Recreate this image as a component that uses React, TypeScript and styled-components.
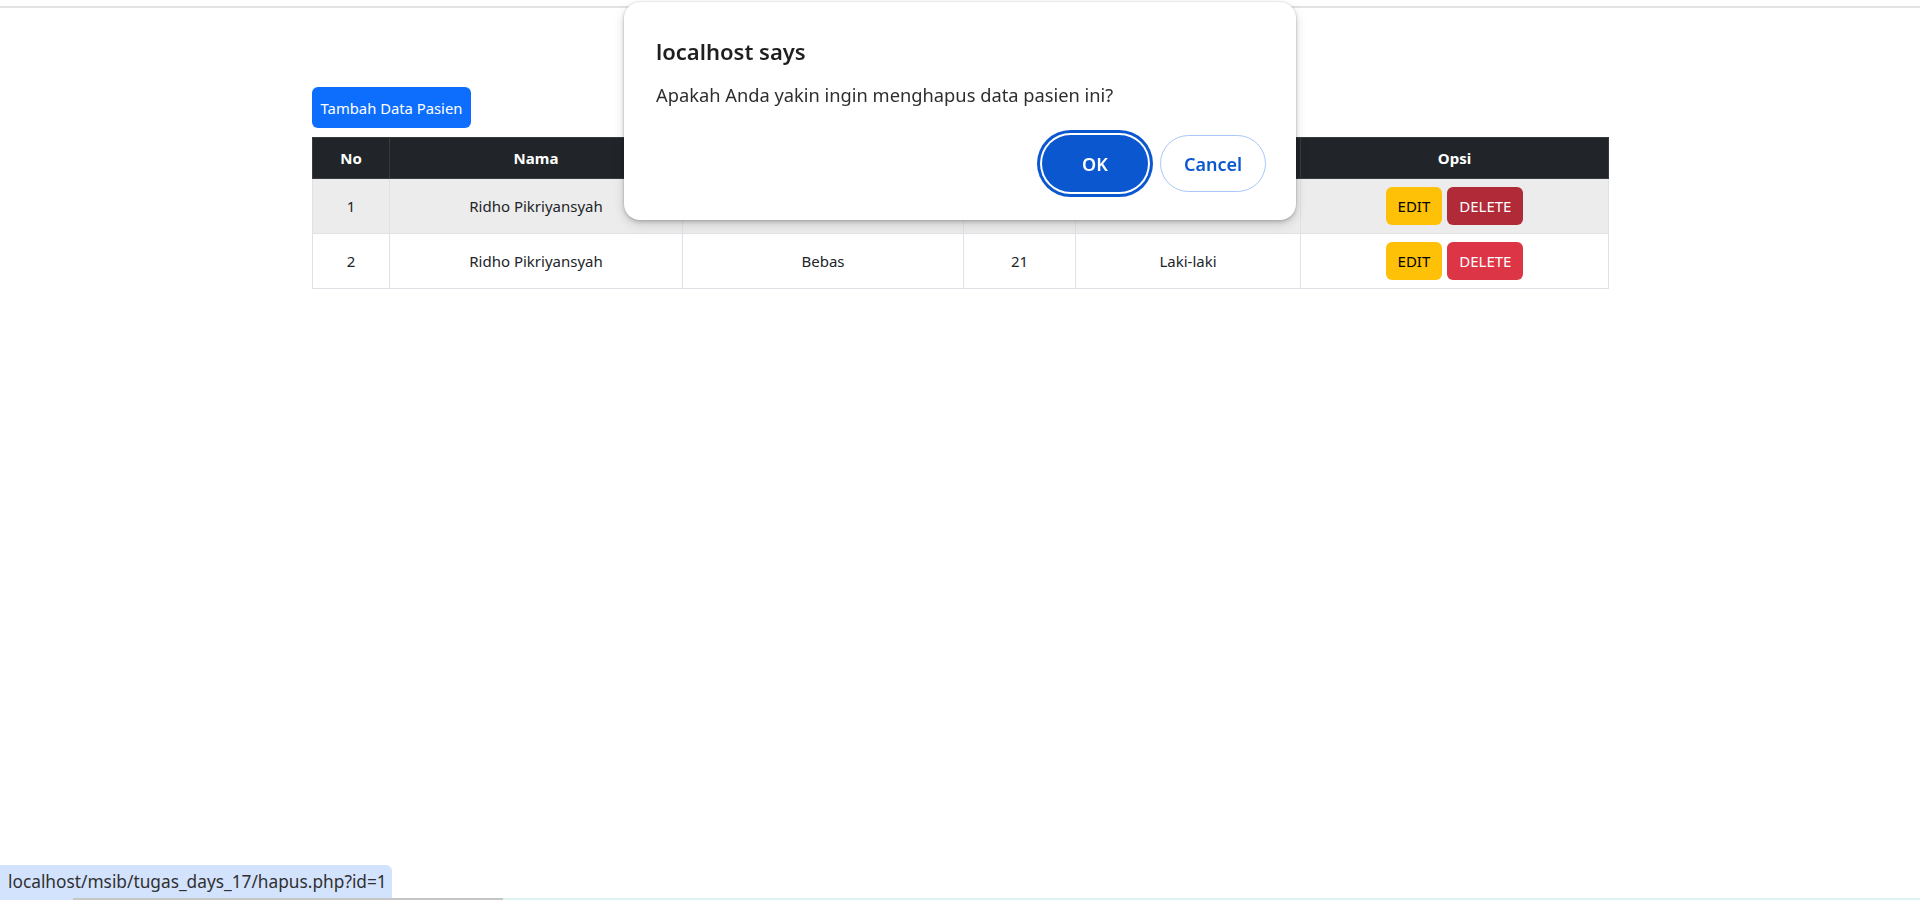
import React from "react";
import styled, { createGlobalStyle } from "styled-components";

const SANS = `"Noto Sans", "Open Sans", sans-serif`;

const GlobalStyle = createGlobalStyle`
  html, body { margin: 0; padding: 0; background: #ffffff; }
  body { font-family: ${SANS}; color: #212529; overflow: hidden; }
  * { box-sizing: border-box; }
`;

const Page = styled.div`
  min-height: 900px;
`;

const TopRule = styled.div`
  height: 2px;
  margin-top: 6px;
  background: #e2e2e2;
`;

const Container = styled.main`
  width: 1296px;
  margin: 79px auto 0;
`;

const Toolbar = styled.div`
  display: flex;
`;

const PrimaryButton = styled.button`
  width: 159px;
  height: 41px;
  border: none;
  border-radius: 6px;
  background: #0d6efd;
  color: #ffffff;
  font-family: ${SANS};
  font-size: 14.8px;
  padding: 0;
  display: flex;
  align-items: center;
  justify-content: center;
`;

const Table = styled.table`
  width: 100%;
  margin-top: 9px;
  border-collapse: collapse;
  table-layout: fixed;
  font-size: 15px;
`;

const HeadCell = styled.th`
  background: #212529;
  color: #ffffff;
  border: 1px solid #373b3e;
  padding: 8px;
  line-height: 24px;
  font-weight: 700;
  text-align: center;
`;

const Row = styled.tr<{ $hover?: boolean }>`
  background: ${(p) => (p.$hover ? "#ececec" : "#ffffff")};
`;

const Cell = styled.td`
  border: 1px solid #dee2e6;
  padding: 8px;
  line-height: 24px;
  text-align: center;
  vertical-align: middle;
  color: #212529;
`;

const Actions = styled.div`
  display: flex;
  justify-content: center;
  gap: 5px;
`;

const ActionButton = styled.button<{ $kind: "edit" | "delete" | "deleteHover" }>`
  height: 38px;
  padding: 0 12px;
  border: none;
  border-radius: 6px;
  font-family: ${SANS};
  font-size: 15px;
  background: ${(p) =>
    p.$kind === "edit" ? "#ffc107" : p.$kind === "deleteHover" ? "#b02a37" : "#dc3545"};
  color: ${(p) => (p.$kind === "edit" ? "#000000" : "#ffffff")};
`;

const Dialog = styled.div`
  position: fixed;
  top: 2px;
  left: 50%;
  transform: translateX(-50%);
  width: 672px;
  background: #ffffff;
  border-radius: 16px;
  padding: 33px 30px 28px 32px;
  box-shadow: 0 0 0 1px rgba(0, 0, 0, 0.05), 0 2px 4px rgba(0, 0, 0, 0.18),
    0 4px 12px rgba(0, 0, 0, 0.14);
`;

const DialogTitle = styled.h2`
  margin: 0;
  font-size: 22px;
  line-height: 32px;
  font-weight: 600;
  color: #1f1f1f;
`;

const DialogMessage = styled.p`
  margin: 16px 0 0;
  font-size: 18.3px;
  line-height: 24px;
  color: #2e2e2e;
`;

const DialogActions = styled.div`
  display: flex;
  justify-content: flex-end;
  gap: 12px;
  margin-top: 28px;
`;

const DialogButton = styled.button<{ $primary?: boolean }>`
  width: 106px;
  height: 57px;
  border-radius: 999px;
  font-family: ${SANS};
  font-size: 18px;
  font-weight: 600;
  padding: 0;
  border: ${(p) => (p.$primary ? "none" : "1px solid #a8c7fa")};
  background: ${(p) => (p.$primary ? "#0b57d0" : "#ffffff")};
  color: ${(p) => (p.$primary ? "#ffffff" : "#0b57d0")};
  box-shadow: ${(p) => (p.$primary ? "0 0 0 2px #ffffff, 0 0 0 5px #0b57d0" : "none")};
`;

const StatusBar = styled.div`
  position: fixed;
  left: 0;
  bottom: 0;
  width: 392px;
  height: 35px;
  padding: 0 0 2px 8px;
  background: #d3e3fd;
  border-top-right-radius: 6px;
  display: flex;
  align-items: center;
  font-size: 17.3px;
  color: #303030;
  white-space: nowrap;
`;

const BottomStrip = styled.div`
  position: fixed;
  left: 0;
  right: 0;
  bottom: 0;
  height: 2px;
  display: flex;
`;

const StripPart = styled.div<{ $w?: number; $c: string }>`
  ${(p) => (p.$w ? `width: ${p.$w}px;` : "flex: 1;")}
  background: ${(p) => p.$c};
`;

const columns = [
  { label: "No", width: 77 },
  { label: "Nama", width: 293 },
  { label: "Penyakit", width: 281 },
  { label: "Umur", width: 112 },
  { label: "Jenis Kelamin", width: 225 },
  { label: "Opsi", width: 308 },
];

const rows = [
  { no: 1, nama: "Ridho Pikriyansyah", penyakit: "Bebas", umur: 21, jk: "Laki-laki", hover: true },
  { no: 2, nama: "Ridho Pikriyansyah", penyakit: "Bebas", umur: 21, jk: "Laki-laki", hover: false },
];

export default function App() {
  return (
    <Page>
      <GlobalStyle />
      <TopRule />
      <Container>
        <Toolbar>
          <PrimaryButton>Tambah Data Pasien</PrimaryButton>
        </Toolbar>
        <Table>
          <colgroup>
            {columns.map((c) => (
              <col key={c.label} style={{ width: c.width }} />
            ))}
          </colgroup>
          <thead>
            <tr>
              {columns.map((c) => (
                <HeadCell key={c.label}>{c.label}</HeadCell>
              ))}
            </tr>
          </thead>
          <tbody>
            {rows.map((r) => (
              <Row key={r.no} $hover={r.hover}>
                <Cell>{r.no}</Cell>
                <Cell>{r.nama}</Cell>
                <Cell>{r.penyakit}</Cell>
                <Cell>{r.umur}</Cell>
                <Cell>{r.jk}</Cell>
                <Cell>
                  <Actions>
                    <ActionButton $kind="edit">EDIT</ActionButton>
                    <ActionButton $kind={r.hover ? "deleteHover" : "delete"}>DELETE</ActionButton>
                  </Actions>
                </Cell>
              </Row>
            ))}
          </tbody>
        </Table>
      </Container>

      <Dialog role="alertdialog">
        <DialogTitle>localhost says</DialogTitle>
        <DialogMessage>Apakah Anda yakin ingin menghapus data pasien ini?</DialogMessage>
        <DialogActions>
          <DialogButton $primary>OK</DialogButton>
          <DialogButton>Cancel</DialogButton>
        </DialogActions>
      </Dialog>

      <StatusBar>localhost/msib/tugas_days_17/hapus.php?id=1</StatusBar>
      <BottomStrip>
        <StripPart $w={73} $c="transparent" />
        <StripPart $w={430} $c="#c6c6c6" />
        <StripPart $c="#def3f2" />
      </BottomStrip>
    </Page>
  );
}
